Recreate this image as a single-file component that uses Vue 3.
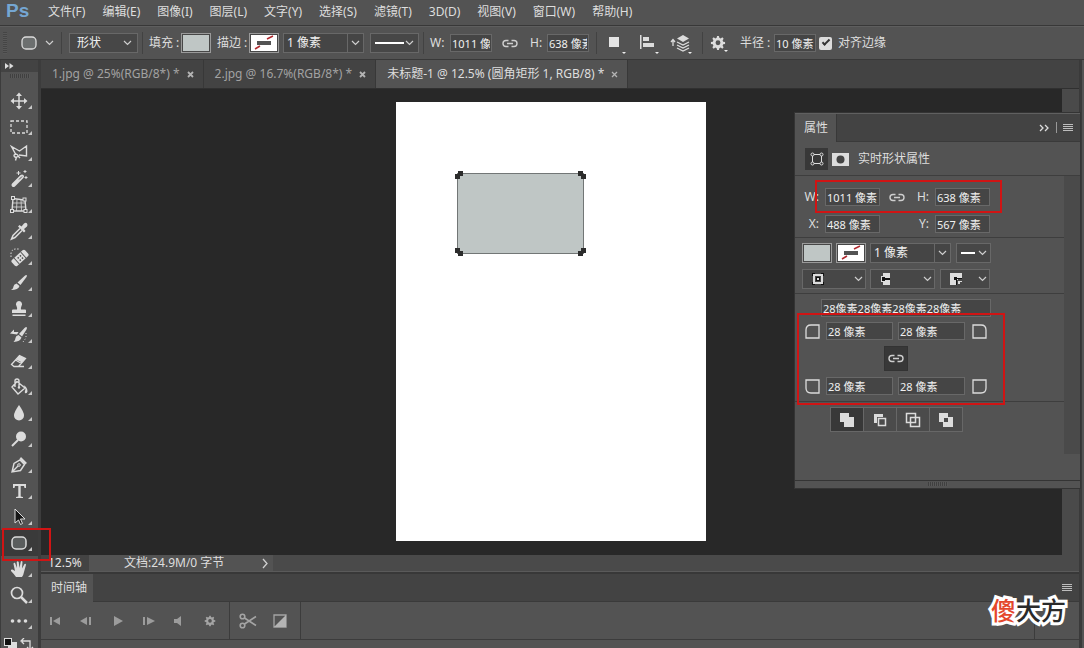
<script setup>
import { ref } from 'vue'

const menus = ['文件(F)', '编辑(E)', '图像(I)', '图层(L)', '文字(Y)', '选择(S)', '滤镜(T)', '3D(D)', '视图(V)', '窗口(W)', '帮助(H)']

const tabs = [
  { title: '1.jpg @ 25%(RGB/8*) *', active: false },
  { title: '2.jpg @ 16.7%(RGB/8*) *', active: false },
  { title: '未标题-1 @ 12.5% (圆角矩形 1, RGB/8) *', active: true }
]

const S = 'fill="none" stroke="#dcdcdc"'
const F = 'fill="#dcdcdc"'
const tools = [
  { name: '移动', art: `<path ${S} stroke-width="1.5" d="M10 4v12M4 10h12"/><path ${F} d="M10 1.500l3 3.500H7zM10 18.500l3-3.500H7zM1.500 10L5 7v6zM18.500 10L15 7v6z"/>` },
  { name: '矩形选框', art: `<rect ${S} stroke-width="1.300" stroke-dasharray="3 2" x="2" y="4" width="16" height="12"/>` },
  { name: '多边形套索', art: `<path ${S} stroke-width="1.400" d="M7 12L2.500 3.500L10.500 8L17.500 3v10L10 12M9 12.500a2 1.500 0 1 0-3 1.500a2 1.500 0 0 0 3-1.500M7.500 14l-1 3.500M9 13l2 2"/>` },
  { name: '魔棒', art: `<path stroke="#dcdcdc" stroke-width="4" stroke-linecap="round" d="M4.500 16L13 7.500"/><path stroke="#535353" stroke-width="1" d="M10 10.500l3-3"/><path ${S} d="M9.500 2v4M7.500 4h4M16 1v3M14.500 2.500h3M17 7v3M15.500 8.500h3"/>` },
  { name: '透视裁剪', art: `<path ${S} stroke-width="1.400" d="M4 3.500l12 1.500l1 11H3z"/><path ${S} stroke-width=".8" d="M8 4l-.5 12M12 4.500l.5 11.500M4 8h12M3.500 12H17"/><g fill="#535353" stroke="#dcdcdc"><rect x="2.500" y="1.500" width="3" height="3"/><rect x="14" y="3" width="3" height="3"/><rect x="1.500" y="14.500" width="3" height="3"/><rect x="15" y="14.500" width="3" height="3"/></g>` },
  { name: '吸管', art: `<path ${S} stroke-width="1.500" d="M11 7.500L4 14.500L2.500 18L6 16.500L13 9.500"/><path ${F} d="M9 5.500l1.500-1.500l2 1.500l2.500-3q2-1.500 3 0t0 3l-3 2.500l1.500 2L15 11.500z"/>` },
  { name: '修复画笔', art: `<g transform="rotate(-42 11 11)"><rect ${F} x="2" y="7" width="18" height="8" rx="2"/><path stroke="#535353" d="M6.500 7v8M15.500 7v8"/><path fill="#535353" d="M9 9h1.500v1.500H9zM12 9h1.500v1.500H12zM9 12h1.500v1.500H9zM12 12h1.500v1.500H12z"/></g><path ${S} stroke-dasharray="1.500 1.500" d="M2 10V6q1-4 5-4h4"/>` },
  { name: '画笔', art: `<path ${F} d="M17.500 2q1 .5 0 2L11.500 12L8.500 9.500L15.500 3q1-1 2-1zM7.500 10.500l3 2.500q-1 4-8.500 4q2.500-1.500 2.500-3.500t3-3z"/>` },
  { name: '仿制图章', art: `<path ${F} d="M10 2a3.200 3.200 0 0 1 2.500 5q-1 2-.5 3.500h4q1 0 1 1V14H3v-2.500q0-1 1-1h4q.5-1.500-.5-3.500A3.200 3.200 0 0 1 10 2zM3.500 15.500h13V17h-13z"/>` },
  { name: '历史记录画笔', art: `<path ${F} d="M17.500 2q1 .8 0 2.500L13 11.500L10 9L15.500 3q1-1 2-1zM9.500 10l3 2.500q-1 4-8 4.500q2-2 2-4t3-3zM1 8.500l4-4V7h4.500L8 9.500z"/><path ${S} stroke-dasharray="1 2" d="M17 8v5l-3 4"/>` },
  { name: '橡皮擦', art: `<path ${F} d="M10.500 4.500L16.500 7.500L13 11.500L7 8.500z"/><path ${S} stroke-width="1.300" d="M10.500 4.500l6 3L9.500 15.500H5L2.500 13.500zM6.500 9l6 3.500M9 15.500h6"/>` },
  { name: '油漆桶', art: `<path ${S} stroke-width="1.400" d="M8 4.500l8 6.500l-7 6l-6-7zM6 10V4q0-2 2-2t2 2v6"/><path ${F} d="M14.500 8q4 2 4 6.500q-.5 2.500-2.500 1.500q-.5-1 .5-4z"/><circle ${F} cx="10" cy="10.500" r="1.200"/>` },
  { name: '模糊', art: `<path ${F} d="M10 2q5 7 5 10.500a5 5 0 0 1-10 0Q5 9 10 2z"/>` },
  { name: '减淡', art: `<circle ${F} cx="12" cy="7.500" r="5"/><path ${S} stroke-width="2" d="M9 11l-6 6"/>` },
  { name: '钢笔', art: `<path ${S} stroke-width="1.400" d="M3 17l2-8.500L11 5l4.500 4.500L11.500 15.500zM3 17l6-6"/><circle ${S} cx="10" cy="10" r="1.300"/><path ${F} d="M12 2l6 6l-2 1.500L10.500 4z"/>` },
  { name: '横排文字', art: `<path ${F} d="M4 3h13v4h-1.500l-.5-2h-3.300v10.500l2.300.5v1H7v-1l2.300-.5V5H6l-.5 2H4z"/>` },
  { name: '路径选择', art: `<path fill="#161616" stroke="#dcdcdc" stroke-width="1" d="M6 2v14l3.500-3l2 4.500l2-1l-2-4.500H16z"/>` },
  { name: '圆角矩形', active: true, art: `<rect fill="#5a5d5d" stroke="#dcdcdc" stroke-width="1.500" x="3" y="4" width="14" height="12" rx="4"/>` },
  { name: '抓手', art: `<path ${F} d="M7 18q-2-3-5-6q-.5-2 1.500-1.500L6 12L4.500 5q0-1.500 1.500-1.200L8 9l-.3-6q1-1.500 2 0L10.500 9l1.300-6.500q1.200-1 1.700.3L13 9.500L15.500 5q1.500-.7 1.500.7L15 13q-.5 3-2 5z"/>` },
  { name: '缩放', art: `<circle ${S} stroke-width="1.700" cx="8" cy="8" r="5.500"/><path ${S} stroke-width="2.500" d="M12 12l6 6"/>` },
  { name: '编辑工具栏', art: `<g ${F}><circle cx="3.500" cy="10" r="1.800"/><circle cx="10" cy="10" r="1.800"/><circle cx="16.500" cy="10" r="1.800"/></g>` }
]

const playback = [
  { name: '转到第一帧', art: '<path d="M3 4h2v8H3zM13 4v8L6 8z"/>' },
  { name: '上一帧', art: '<path d="M9 4v8L2 8zM11 4h2v8h-2z"/>' },
  { name: '播放', art: '<path d="M4 3l9 5l-9 5z"/>' },
  { name: '下一帧', art: '<path d="M2 4h2v8H2zM6 4l8 4l-8 4z"/>' },
  { name: '静音', art: '<path d="M1 6h3l4-3v10L4 10H1z"/>' }
]

const combine = [
  { name: '合并形状', art: `<path ${F} d="M2 2h9v4h5v10H6v-5H2z"/>` },
  { name: '减去顶层形状', art: `<path ${F} d="M3 3h9v3H6v6H3z"/><path ${F} d="M3 3h8v3H6v5H3z"/><rect ${S} stroke-width="1.500" x="7.500" y="7.500" width="7" height="7"/>` },
  { name: '与形状区域相交', art: `<rect ${S} stroke-width="1.500" x="2.500" y="2.500" width="9" height="9"/><rect ${S} stroke-width="1.500" x="6.500" y="6.500" width="9" height="9"/>` },
  { name: '排除重叠形状', art: `<path ${F} fill-rule="evenodd" d="M2 2h9v4h5v10H6v-5H2zM7 7v4h4V7z"/>` }
]

const snap = ref(true)
const width = ref('1011 像素')
const height = ref('638 像素')
const radii = ref(['28 像素', '28 像素', '28 像素', '28 像素'])
const gear = 'M7 1h2l.4 2 1.500.6 1.700-1.100 1.400 1.400-1.100 1.700.6 1.500 2 .4v2l-2 .4-.6 1.500 1.100 1.700-1.400 1.400-1.700-1.100-1.500.6-.4 2H7l-.4-2-1.500-.6-1.700 1.100L2 13.100l1.100-1.700-.6-1.500-2-.4v-2l2-.4.6-1.500L2 3.900l1.400-1.400 1.700 1.100L6.600 3zM8 5.700a2.600 2.600 0 1 0 0 5.200a2.600 2.600 0 0 0 0-5.200z'
const chain = 'M6.500 2.500H4a3 3 0 0 0 0 6h2.500M9.500 2.500H12a3 3 0 0 1 0 6H9.500M5 5.500h6'
</script>

<template>
  <div class="app">
    <header class="menubar">
      <span class="logo">Ps</span>
      <nav class="menus">
        <button v-for="m in menus" :key="m" type="button">{{ m }}</button>
      </nav>
    </header>

    <div class="options">
      <span class="grip-v"></span>
      <button type="button" class="preset" aria-label="工具预设">
        <svg width="18" height="16" viewBox="0 0 18 16"><rect x="2" y="2" width="14" height="12" rx="4" fill="#6c6f6f" stroke="#dcdcdc" stroke-width="1.300" /></svg>
        <svg class="chev" width="9" height="6" viewBox="0 0 9 6"><path d="M1 1l3.500 3.500L8 1" /></svg>
      </button>
      <i class="sep"></i>
      <div class="pick mode">
        <select aria-label="工具模式"><option>形状</option></select>
        <svg class="chev" width="9" height="6" viewBox="0 0 9 6"><path d="M1 1l3.500 3.500L8 1" /></svg>
      </div>
      <i class="sep tight"></i>
      <span class="cap" id="fill-cap">填充 :</span>
      <button type="button" class="swatch" aria-labelledby="fill-cap"><span class="solid"></span></button>
      <span class="cap" id="stroke-cap">描边 :</span>
      <button type="button" class="swatch" aria-labelledby="stroke-cap">
        <svg class="none" width="26" height="16" viewBox="0 0 26 16"><path fill="#fff" d="M0 0h26v16H0z" /><path fill="#535353" d="M6 6h14v4H6z" /><path stroke="#b02a30" stroke-width="1.500" d="M4 14l5-3M16 4l6-3" /></svg>
      </button>
      <div class="combo stroke-size">
        <input value="1 像素" aria-label="描边宽度" />
        <button type="button" aria-label="描边宽度选项"><svg class="chev" width="9" height="6" viewBox="0 0 9 6"><path d="M1 1l3.500 3.500L8 1" /></svg></button>
      </div>
      <div class="pick line">
        <select aria-label="描边类型"><option></option></select>
        <span class="rule"></span>
        <svg class="chev" width="9" height="6" viewBox="0 0 9 6"><path d="M1 1l3.500 3.500L8 1" /></svg>
      </div>
      <i class="sep tight"></i>
      <label class="cap wide" for="opt-w">W:</label>
      <input id="opt-w" class="field short" v-model="width" />
      <button type="button" class="bare chainbtn" aria-label="链接宽高"><svg width="16" height="11" viewBox="0 0 16 11"><path :d="chain" class="chain" /></svg></button>
      <label class="cap narrow" for="opt-h">H:</label>
      <input id="opt-h" class="field short" v-model="height" />
      <i class="sep"></i>
      <div class="ops">
        <button type="button" class="bare drop" aria-label="路径操作"><svg width="20" height="20" viewBox="0 0 20 20"><path fill="#e4e4e4" d="M5 4h10v10H5z" /></svg></button>
        <button type="button" class="bare drop" aria-label="路径对齐"><svg width="20" height="20" viewBox="0 0 20 20"><path fill="#dcdcdc" d="M3 2h1.500v14H3zM6 4h6v4H6zM6 10h11v4H6z" /></svg></button>
        <button type="button" class="bare drop" aria-label="路径排列"><svg width="20" height="20" viewBox="0 0 20 20"><path fill="none" stroke="#dcdcdc" stroke-width="1.300" d="M3 7v6M1 9l2-2.500L5 9M7 12l6 3l6-3M7 15l6 3l6-3M7 9l6 3l6-3" /><path fill="#dcdcdc" d="M13 2l6 3.500L13 9L7 5.500z" /></svg></button>
      </div>
      <i class="sep"></i>
      <button type="button" class="bare drop" aria-label="设置"><svg width="16" height="16" viewBox="0 0 16 17"><path :d="gear" fill="#dcdcdc" /></svg></button>
      <label class="cap radius" for="opt-r">半径 :</label>
      <input id="opt-r" class="field short" value="10 像素" />
      <label class="snap"><input type="checkbox" v-model="snap" />对齐边缘</label>
    </div>

    <div class="body">
      <aside class="tools">
        <div class="tools-head"><svg width="9" height="6" viewBox="0 0 9 6"><path fill="#ddd" d="M0 0l4 3l-4 3zM4.500 0l4 3l-4 3z" /></svg></div>
        <div class="grip"></div>
        <button v-for="t in tools" :key="t.name" type="button" class="tool" :class="{ active: t.active }" :aria-label="t.name">
          <svg width="20" height="20" viewBox="0 0 20 20" v-html="t.art"></svg>
        </button>
        <svg class="colors" width="32" height="22" viewBox="0 0 32 22"><path fill="#ddd" d="M4 4h9v9H4z" /><path fill="#ddd" d="M0 0h8v8H0z" /><path fill="#111" d="M1 1h6v6H1z" /><path fill="none" stroke="#dcdcdc" stroke-width="1.300" d="M18 3h8v8M20 0l-3 3l3 3M23 9l3 3l3-3" /></svg>
        <div class="mark mark-tool"></div>
      </aside>

      <main class="work">
        <div class="tabs">
          <div v-for="t in tabs" :key="t.title" class="tab" :class="{ active: t.active }">
            <span>{{ t.title }}</span>
            <button type="button" :aria-label="'关闭 ' + t.title"><svg width="7" height="7" viewBox="0 0 7 7"><path d="M1 1l5 5M6 1L1 6" /></svg></button>
          </div>
        </div>

        <div class="canvas">
          <div class="stage">
            <div class="doc">
              <div class="shape">
                <i class="h tl"></i><i class="h tr"></i><i class="h bl"></i><i class="h br"></i>
              </div>
            </div>
          </div>
          <div class="scroll"></div>
        </div>

        <div class="status">
          <input value="12.5%" aria-label="缩放比例" />
          <div class="info"><span>文档:24.9M/0 字节</span><svg width="6" height="11" viewBox="0 0 6 11"><path d="M1 1l4 4.500L1 10" /></svg></div>
        </div>

        <section class="timeline">
          <div class="tl-tabs">
            <span class="tl-tab">时间轴</span>
            <button type="button" class="burger" aria-label="时间轴菜单"></button>
          </div>
          <div class="tl-row">
            <div class="play">
              <button v-for="p in playback" :key="p.name" type="button" class="bare" :aria-label="p.name"><svg width="16" height="16" viewBox="0 0 16 16" fill="#9c9c9c" v-html="p.art"></svg></button>
              <button type="button" class="bare gearbtn" aria-label="播放选项"><svg width="12" height="12" viewBox="0 0 16 17"><path :d="gear" fill="#a4a4a4" /></svg></button>
            </div>
            <div class="cut">
              <button type="button" class="bare" aria-label="拆分"><svg width="18" height="16" viewBox="0 0 18 16"><g fill="none" stroke="#a4a4a4" stroke-width="1.600"><circle cx="3.500" cy="3.500" r="2.300" /><circle cx="3.500" cy="12.500" r="2.300" /><path d="M5.500 5L17 12.500M5.500 11L17 3.500" /></g></svg></button>
              <button type="button" class="bare" aria-label="过渡效果"><svg width="14" height="14" viewBox="0 0 14 14"><path fill="none" stroke="#a4a4a4" stroke-width="1.300" d="M1 1h12v12H1z" /><path fill="#b4b4b4" d="M13 1v12H1z" /></svg></button>
            </div>
            <div class="track"></div>
          </div>
          <div class="tl-foot"></div>
          <div class="brand"><b>傻</b>大方</div>
        </section>
      </main>

      <div class="dock"></div>

      <section class="panel">
        <div class="p-tabs">
          <span class="p-tab">属性</span>
          <span class="p-tools">
            <button type="button" class="bare" aria-label="折叠面板"><svg width="11" height="8" viewBox="0 0 11 8"><path fill="none" stroke="#ddd" stroke-width="1.300" d="M1 1l3 3l-3 3M6 1l3 3l-3 3" /></svg></button>
            <i></i>
            <button type="button" class="burger" aria-label="面板菜单"></button>
          </span>
        </div>
        <div class="p-title">
          <button type="button" class="bare on" aria-label="实时形状"><svg width="14" height="14" viewBox="0 0 14 14"><path fill="none" stroke="#dcdcdc" d="M3 2.500h8M3 11.500h8M2.500 3v8M11.500 3v8" /><g fill="#383838" stroke="#dcdcdc"><circle cx="2.500" cy="2.500" r="1.500" /><circle cx="11.500" cy="2.500" r="1.500" /><circle cx="2.500" cy="11.500" r="1.500" /><circle cx="11.500" cy="11.500" r="1.500" /></g></svg></button>
          <button type="button" class="bare" aria-label="蒙版"><svg width="17" height="13" viewBox="0 0 17 13"><path fill="#dcdcdc" d="M0 0h17v13H0z" /><circle cx="8.500" cy="6.500" r="4" fill="#444" /></svg></button>
          <span>实时形状属性</span>
        </div>
        <div class="p-body">
          <div class="p-main">
            <div class="block dims">
              <label for="p-w">W:</label><input id="p-w" class="field" v-model="width" />
              <span class="mid"><button type="button" class="bare" aria-label="链接"><svg width="16" height="11" viewBox="0 0 16 11"><path :d="chain" class="chain" /></svg></button><label for="p-h">H:</label></span>
              <input id="p-h" class="field" v-model="height" />
              <label for="p-x">X:</label><input id="p-x" class="field" value="488 像素" />
              <span class="mid end"><label for="p-y">Y:</label></span>
              <input id="p-y" class="field" value="567 像素" />
            </div>
            <div class="block look">
              <div class="row">
                <button type="button" class="swatch" aria-label="填充"><span class="solid"></span></button>
                <button type="button" class="swatch" aria-label="描边"><svg class="none" width="26" height="16" viewBox="0 0 26 16"><path fill="#fff" d="M0 0h26v16H0z" /><path fill="#535353" d="M6 6h14v4H6z" /><path stroke="#b02a30" stroke-width="1.500" d="M4 14l5-3M16 4l6-3" /></svg></button>
                <div class="combo">
                  <input value="1 像素" aria-label="描边粗细" />
                  <button type="button" aria-label="描边粗细选项"><svg class="chev" width="9" height="6" viewBox="0 0 9 6"><path d="M1 1l3.500 3.500L8 1" /></svg></button>
                </div>
                <div class="pick mini">
                  <select aria-label="线型"><option></option></select><span class="rule"></span>
                  <svg class="chev" width="9" height="6" viewBox="0 0 9 6"><path d="M1 1l3.500 3.500L8 1" /></svg>
                </div>
              </div>
              <div class="row kinds">
                <div class="pick k1"><select aria-label="描边对齐"><option></option></select>
                  <svg width="14" height="14" viewBox="0 0 14 14"><path fill="none" stroke="#dcdcdc" stroke-width="2" d="M3 3h8v8H3z" /><path fill="#111" d="M5 5h4v4H5zM1 1h3v1H2v2H1zM13 1v3h-1V2h-2V1zM1 13v-3h1v2h2v1zM13 13h-3v-1h2v-2h1z" /><path fill="#ddd" d="M6 6h2v2H6z" /></svg>
                  <svg class="chev" width="9" height="6" viewBox="0 0 9 6"><path d="M1 1l3.500 3.500L8 1" /></svg></div>
                <div class="pick k2"><select aria-label="描边端点"><option></option></select>
                  <svg width="12" height="14" viewBox="0 0 12 14"><path fill="#dcdcdc" d="M4 1h7v5H4zM4 8h7v5H4z" /><path fill="#dcdcdc" d="M2 4h4v6H2z" /><path fill="#111" d="M3 5h3v1h5v2H6v1H3z" /></svg>
                  <svg class="chev" width="9" height="6" viewBox="0 0 9 6"><path d="M1 1l3.500 3.500L8 1" /></svg></div>
                <div class="pick k3"><select aria-label="描边角点"><option></option></select>
                  <svg width="14" height="14" viewBox="0 0 14 14"><path fill="#dcdcdc" d="M1 1h12v6h-4v1H8v5H1z" /><path fill="#111" d="M5 5h3v1h5v1H8v6H7V8H5z" /><path fill="#dcdcdc" d="M9 9h4v1h-2v2H9z" /></svg>
                  <svg class="chev" width="9" height="6" viewBox="0 0 9 6"><path d="M1 1l3.500 3.500L8 1" /></svg></div>
              </div>
            </div>
            <div class="block corners">
              <input class="field sum" value="28像素28像素28像素28像素" aria-label="圆角半径" />
              <div class="pair">
                <svg width="15" height="15" viewBox="0 0 15 15"><path d="M1 14V6q0-5 5-5h8v13z" /></svg>
                <input class="field" v-model="radii[0]" aria-label="左上角半径" />
                <input class="field" v-model="radii[1]" aria-label="右上角半径" />
                <svg width="15" height="15" viewBox="0 0 15 15"><path d="M1 1h8q5 0 5 5v8H1z" /></svg>
              </div>
              <button type="button" class="bare on lock" aria-label="链接圆角"><svg width="16" height="11" viewBox="0 0 16 11"><path :d="chain" class="chain" /></svg></button>
              <div class="pair">
                <svg width="15" height="15" viewBox="0 0 15 15"><path d="M1 1h13v13H6q-5 0-5-5z" /></svg>
                <input class="field" v-model="radii[2]" aria-label="左下角半径" />
                <input class="field" v-model="radii[3]" aria-label="右下角半径" />
                <svg width="15" height="15" viewBox="0 0 15 15"><path d="M1 1h13v8q0 5-5 5H1z" /></svg>
              </div>
            </div>
            <div class="bools">
              <button v-for="(c, i) in combine" :key="c.name" type="button" :class="{ on: i === 0 }" :aria-label="c.name"><svg width="18" height="18" viewBox="0 0 18 18" v-html="c.art"></svg></button>
            </div>
          </div>
          <div class="p-scroll"></div>
        </div>
        <div class="p-foot"><span class="grip"></span></div>
        <div class="mark mark-size"></div>
        <div class="mark mark-radius"></div>
      </section>
    </div>
  </div>
</template>

<style>
body { background: #535353; }
</style>

<style scoped>
.app {
  display: flex; flex-direction: column; height: 100vh; overflow: hidden;
  background: #535353; color: #dedede;
  font: 12px/16px "Noto Sans", "Noto Sans CJK SC", sans-serif;
}
.app *, .app *::before, .app *::after { box-sizing: border-box; }
button, input, select { font: inherit; color: inherit; margin: 0; border-radius: 0; outline: 0; }
button { padding: 0; border: 0; background: none; }
svg { display: block; flex: none; }

.menubar { display: flex; flex: none; height: 26px; border-bottom: 1px solid #383838; }
.logo { width: 40px; padding-left: 6px; font: bold 19px/22px "Liberation Sans", sans-serif; color: #75a6d2; }
.menus { display: flex; gap: 17px; padding-left: 8px; height: 23px; }
.menus button { white-space: nowrap; }

.options { display: flex; flex: none; align-items: center; height: 34px; border-top: 1px solid #5e5e5e; border-bottom: 1px solid #383838; }
.grip-v { width: 4px; height: 22px; margin: 0 13px 0 3px; background: repeating-linear-gradient(#454545 0 1px, #585858 1px 2px); }
.preset { display: flex; align-items: center; gap: 7px; }
.chev path { fill: none; stroke: #cfcfcf; stroke-width: 1.200; }
.sep { flex: none; width: 1px; height: 22px; margin: 0 7px; background: #424242; }
.sep.tight { margin: 0 6px 0 4px; }
.cap { flex: none; width: 32px; white-space: nowrap; }
.cap.wide { width: 20px; }
.cap.narrow { width: 17px; }
.pick { position: relative; display: flex; align-items: center; justify-content: space-between; height: 20px; padding: 0 5px; border: 1px solid #686868; background: #474747; }
.pick select { position: absolute; inset: 0; width: 100%; border: 0; padding: 0 7px; background: none; appearance: none; color: #f0f0f0; }
.pick .chev { margin-left: auto; pointer-events: none; }
.mode { width: 69px; }
.swatch { display: block; width: 30px; height: 20px; padding: 1px; border: 1px solid #9a9a9a; flex: none; background: #474747; }
.solid { display: block; height: 16px; background: #bfc6c5; }
.options .swatch { margin-right: 6px; }
.options .swatch + .combo { margin-left: -2px; }
.combo { display: flex; height: 20px; border: 1px solid #686868; background: #454545; }
.combo input { flex: 1; min-width: 0; padding: 0 3px; border: 0; background: none; color: #f0f0f0; }
.combo button { display: grid; place-items: center; width: 16px; border-left: 1px solid #686868; }
.stroke-size { width: 81px; margin-right: 6px; }
.line { width: 49px; padding: 0 4px; }
.rule { width: 29px; height: 2px; background: #fff; }
.field { height: 18px; min-width: 0; padding: 0 1px; border: 1px solid #686868; background: #454545; color: #f0f0f0; font-size: 11px; }
.field.short { width: 42px; flex: none; }
.chain { fill: none; stroke: #cfcfcf; stroke-width: 1.400; }
.bare { display: grid; place-items: center; flex: none; }
.chainbtn { margin: 0 12px 0 10px; }
.ops { display: flex; gap: 13px; padding: 0 5px 0 0; }
.drop { position: relative; }
.drop::after { content: ""; position: absolute; right: -2px; bottom: -3px; border: 2px solid transparent; border-top-color: #eee; }
.options > .drop { margin-right: 14px; }
.radius { width: 34px; }
.snap { display: flex; align-items: center; gap: 6px; margin-left: 3px; white-space: nowrap; }
.snap input { display: grid; place-items: center; width: 13px; height: 13px; border-radius: 2px; background: #dcdcdc; appearance: none; }
.snap input:checked::after { content: ""; width: 8px; height: 4px; border: solid #333; border-width: 0 0 2px 2px; transform: rotate(-45deg) translate(1px, -1px); }

.body { position: relative; display: flex; flex: 1; min-height: 0; }
.tools { position: relative; display: flex; flex-direction: column; flex: none; width: 41px; border: solid #3c3c3c; border-width: 0 3px 0 1px; }
.tools-head { flex: none; height: 12px; padding: 3px 4px; background: #434343; }
.grip { flex: none; width: 20px; height: 4px; margin: 2px 9px 10px; background: repeating-linear-gradient(90deg, #404040 0 1px, #585858 1px 2px); }
.tool { position: relative; flex: none; display: flex; align-items: center; height: 26px; padding-left: 8px; }
.tool::after { content: ""; position: absolute; right: 6px; bottom: 5px; border: 2px solid; border-color: transparent #c8c8c8 #c8c8c8 transparent; }
.tool.active { background: #3a3a3a; }
.colors { margin: 4px 3px; }
.mark { position: absolute; border: 2px solid #d01414; pointer-events: none; }
.mark-tool { left: 1px; top: 468px; width: 49px; height: 33px; z-index: 2; }

.work { display: flex; flex: 1; flex-direction: column; min-width: 0; }
.tabs { display: flex; flex: none; height: 29px; background: #434343; border-bottom: 1px solid #303030; }
.tab { display: flex; align-items: center; gap: 7px; padding: 0 9px 0 11px; border-right: 1px solid #383838; color: #a2a2a2; white-space: nowrap; }
.tab path { stroke: #b4b4b4; stroke-width: 1.800; }
.tab.active { background: #535353; color: #dedede; }
.tab.active path { stroke-width: 1.300; }
.canvas { display: flex; flex: 1; min-height: 0; background: #282828; }
.stage { display: flex; flex: 1; justify-content: center; align-items: flex-start; padding: 13px 1px 13px 0; }
.doc { width: 310px; height: 439px; padding: 71px 0 0 61px; background: #fff; }
.scroll { flex: none; width: 17px; background: #4a4a4a; }
.shape { position: relative; width: 127px; height: 81px; border: 1px solid #727676; background: #bfc6c5; }
.h { position: absolute; width: 8px; height: 8px; background: linear-gradient(#2c2c2c, #2c2c2c) 0 3px / 5px 5px no-repeat, linear-gradient(#2c2c2c, #2c2c2c) 3px 0 / 5px 5px no-repeat; }
.tl { left: -3px; top: -3px; }
.tr { right: -3px; top: -3px; transform: scaleX(-1); }
.bl { left: -3px; bottom: -3px; transform: scaleY(-1); }
.br { right: -3px; bottom: -3px; transform: scale(-1); }

.status { display: flex; flex: none; height: 17px; background: #4a4a4a; border-bottom: 1px solid #5a5a5a; }
.status input { width: 48px; padding: 0 0 0 7px; border: 0; background: #434343; color: #e4e4e4; }
.info { display: flex; align-items: center; justify-content: space-between; width: 184px; padding: 0 5px 0 35px; background: #535353; }
.info path { fill: none; stroke: #d0d0d0; stroke-width: 1.300; }

.timeline { position: relative; flex: none; border-top: 2px solid #383838; }
.tl-tabs { display: flex; justify-content: space-between; align-items: center; height: 28px; background: #434343; border-bottom: 1px solid #3a3a3a; }
.tl-tab { align-self: stretch; display: flex; align-items: center; margin-bottom: -1px; padding: 0 8px 0 10px; width: 52px; background: #535353; white-space: nowrap; }
.burger { width: 10px; height: 8px; margin-right: 7px; background: repeating-linear-gradient(#bdbdbd 0 1px, transparent 1px 2px); }
.tl-row { display: flex; height: 38px; border-bottom: 1px solid #3c3c3c; }
.play { display: flex; align-items: center; justify-content: space-between; width: 189px; padding: 0 13px 0 6px; border-right: 1px solid #3c3c3c; }
.cut { display: flex; align-items: center; justify-content: space-between; width: 71px; padding: 0 13px 0 9px; border-right: 1px solid #3c3c3c; }
.track { flex: 1; margin-right: 44px; border-right: 1px solid #3c3c3c; }
.tl-foot { height: 8px; }
.brand { position: absolute; right: 13px; top: 18px; color: #2a2a2a; font: 500 25px/34px "Noto Sans CJK SC", sans-serif; -webkit-text-stroke: 6px #fff; paint-order: stroke fill; }
.brand b { color: #e4472c; font-weight: 500; }

.dock { flex: none; width: 5px; border-left: 3px solid #3a3a3a; background: #535353; }

.panel { position: absolute; right: 4px; top: 53px; width: 285px; border-top: 1px solid #606060; background: #535353; box-shadow: 0 0 0 1px #343434; }
.p-tabs { display: flex; justify-content: space-between; height: 28px; background: #434343; border-bottom: 1px solid #3a3a3a; }
.p-tab { display: flex; align-items: center; width: 42px; margin-bottom: -1px; padding-left: 9px; background: #535353; border-right: 1px solid #383838; }
.p-tools { display: flex; align-items: center; gap: 6px; }
.p-tools i { width: 1px; height: 11px; background: #999; }
.p-title { display: flex; align-items: center; gap: 4px; height: 34px; padding: 1px 0 0 10px; border-bottom: 1px solid #3e3e3e; }
.p-title .bare { height: 22px; }
.p-title .on { width: 23px; }
.p-title span { padding-left: 5px; }
.on { background: #383838; }
.p-body { display: flex; height: 304px; }
.p-scroll { width: 16px; height: 278px; background: #4a4a4a; }
.p-main { flex: 1; min-width: 0; }
.block { border-bottom: 1px solid #3e3e3e; }
.dims { display: grid; grid-template-columns: 24px 55px 43px 55px; grid-auto-rows: 18px; align-items: center; gap: 9px 6px; height: 62px; padding-top: 12px; }
.dims > label { text-align: right; }
.mid { display: flex; align-items: center; justify-content: space-between; padding-left: 3px; }
.mid.end { justify-content: flex-end; }
.look { display: flex; flex-direction: column; gap: 6px; height: 56px; padding: 5px 7px 0; }
.row { display: flex; gap: 4px; }
.row .combo { width: 81px; }
.row .mini { width: 35px; padding: 0 3px 0 4px; margin-left: 1px; }
.mini .rule { width: 14px; }
.kinds .pick { padding-right: 2px; }
.kinds .pick > svg:not(.chev) { margin-left: 3px; }
.k1 { width: 64px; }
.k2 { width: 65px; }
.k3 { width: 50px; margin-left: 1px; }
.corners { height: 108px; padding: 5px 9px 0 10px; }
.sum { display: block; width: 170px; margin: 0 0 5px 16px; }
.pair { display: flex; align-items: center; gap: 5px; }
.pair svg { fill: none; stroke: #dcdcdc; stroke-width: 1.300; }
.pair .field { width: 67px; }
.pair .field:first-of-type { margin-left: 1px; }
.pair svg:last-child { margin-left: 2px; }
.lock { width: 24px; height: 25px; margin: 6px 0 6px 79px; border: 1px solid #333; }
.bools { display: flex; width: 133px; height: 25px; margin: 5px 0 0 35px; border: 1px solid #676767; }
.bools button { display: grid; place-items: center; flex: 1; border-right: 1px solid #676767; background: #4b4b4b; }
.bools button:last-child { border-right: 0; }
.bools .on { background: #383838; }
.p-foot { display: flex; justify-content: center; height: 8px; border-top: 1px solid #343434; }
.p-foot .grip { margin: 1px 0; }
.mark-size { left: 20px; top: 66px; width: 187px; height: 33px; }
.mark-radius { left: 2px; top: 199px; width: 208px; height: 92px; }
</style>
